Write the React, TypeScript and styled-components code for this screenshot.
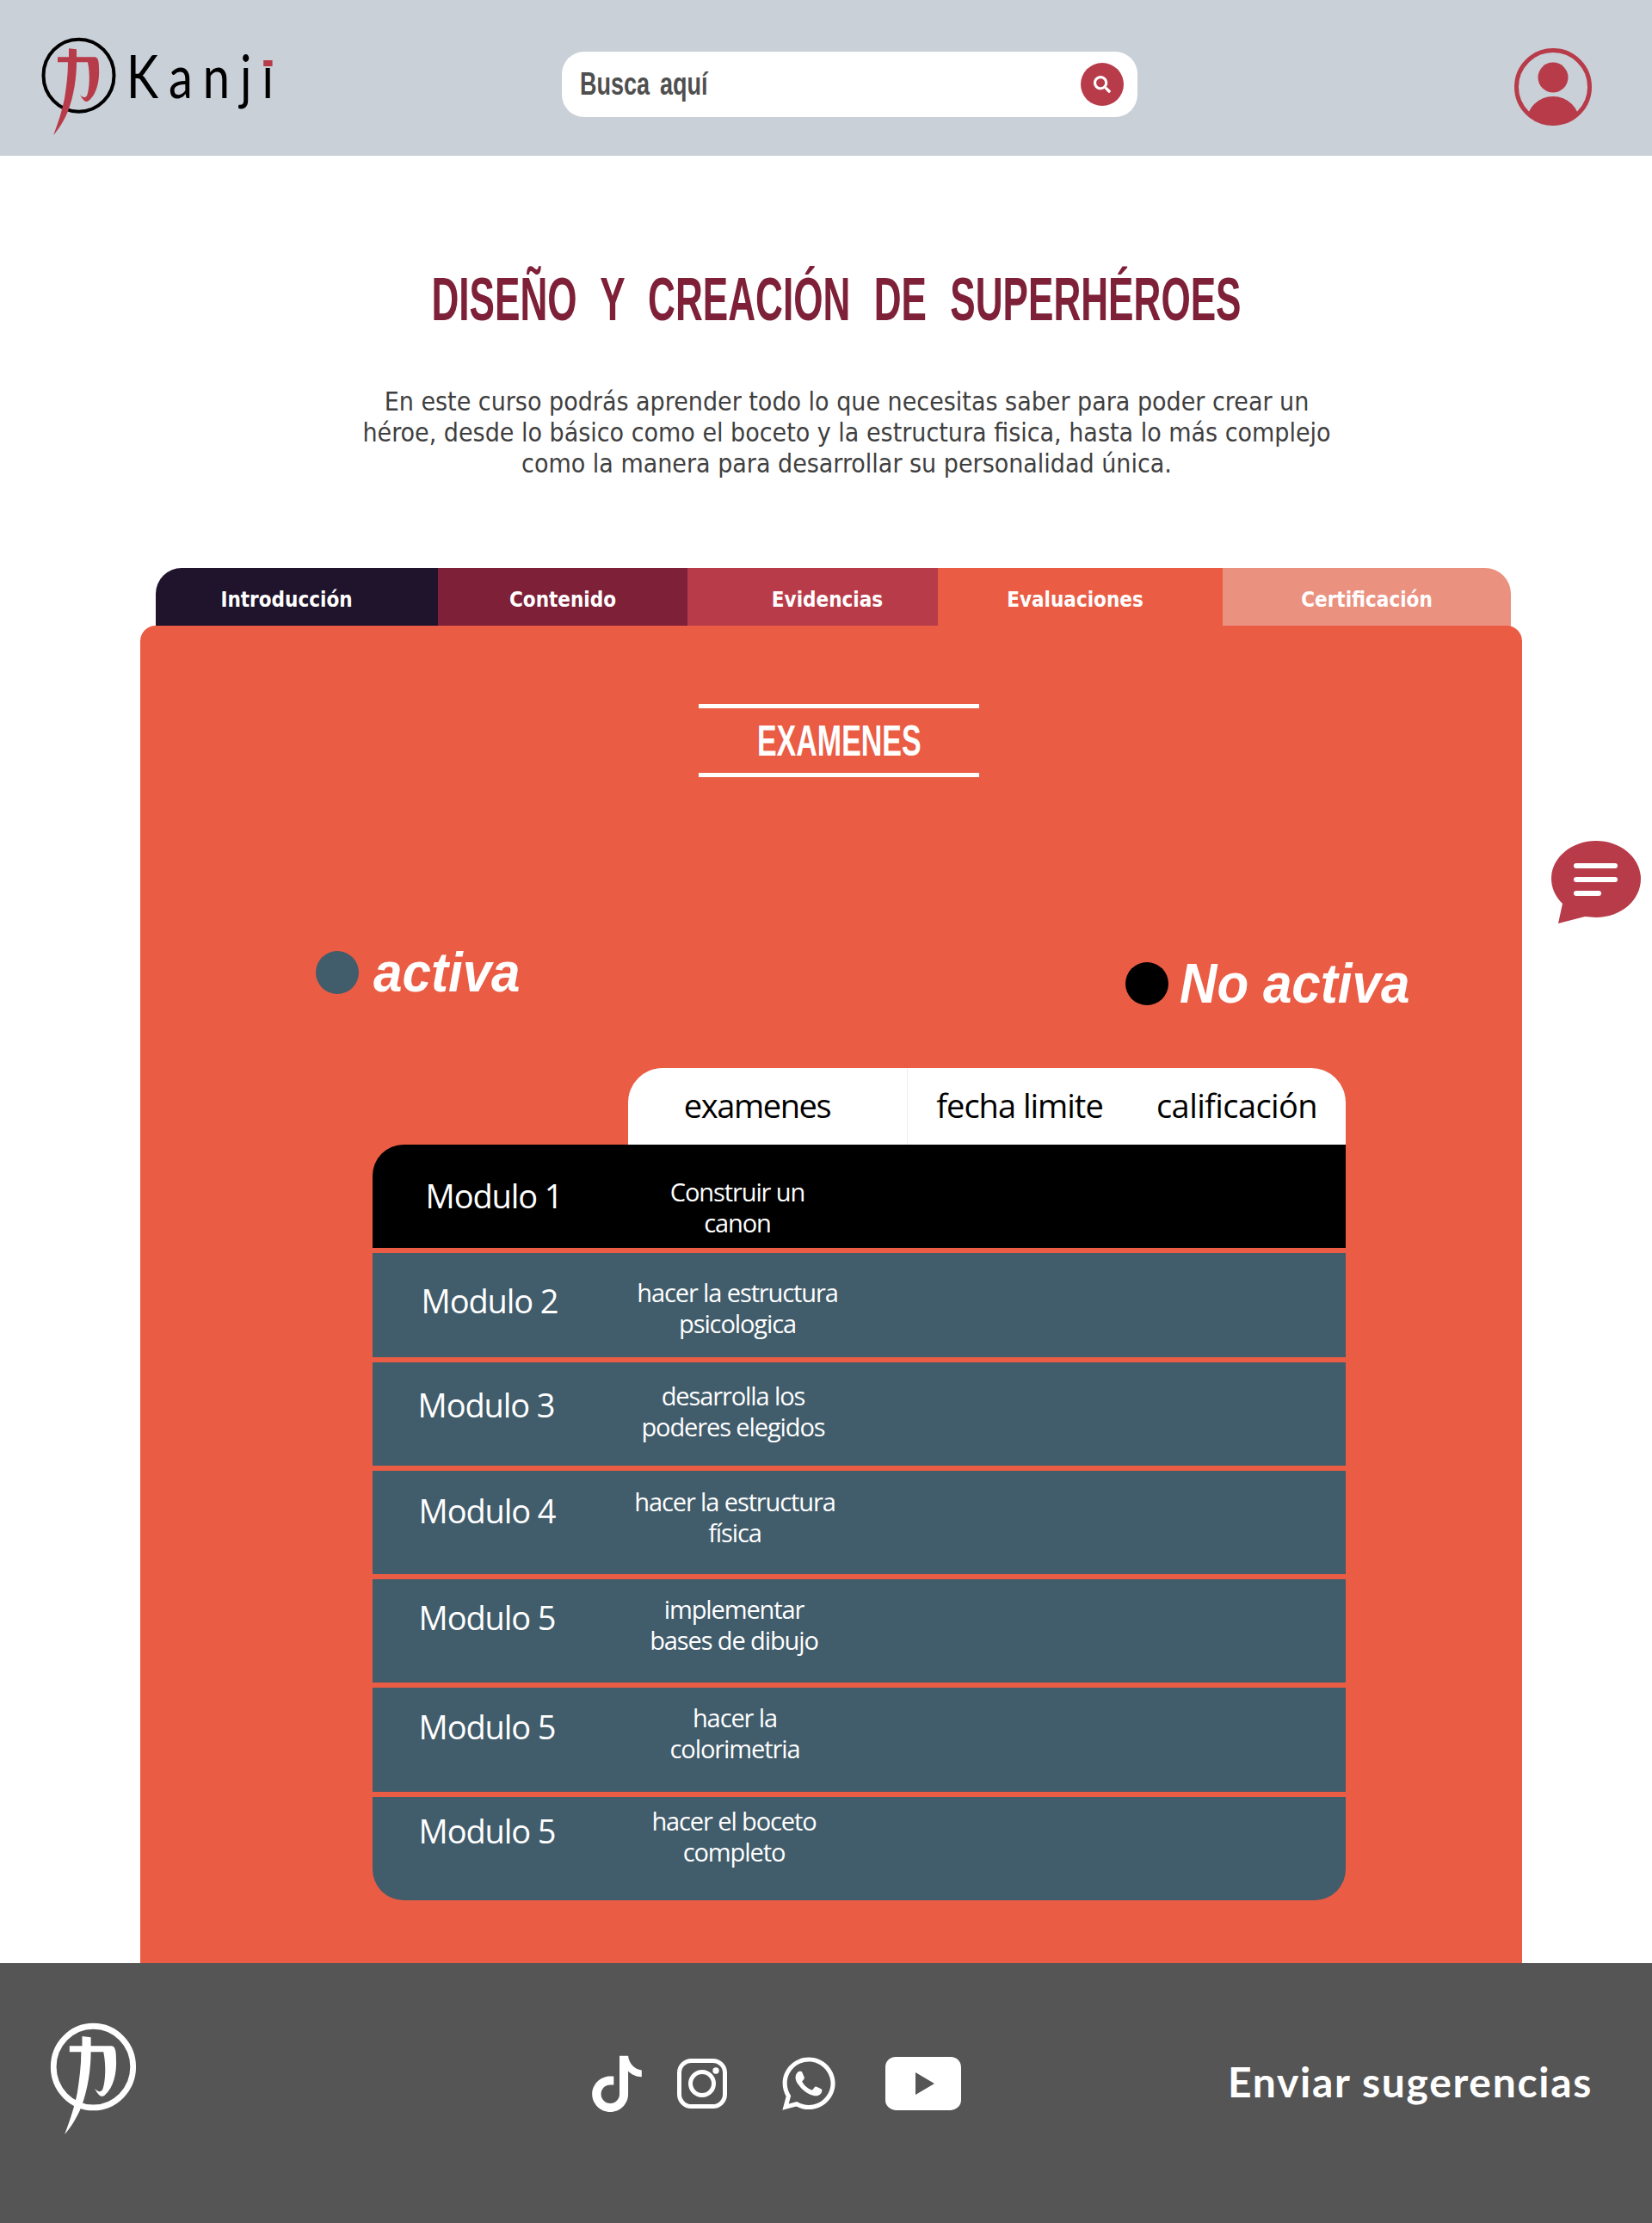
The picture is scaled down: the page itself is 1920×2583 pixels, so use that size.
import React from 'react';
import styled, { createGlobalStyle } from 'styled-components';
import { FaSearch, FaWhatsapp } from 'react-icons/fa';

const GlobalStyle = createGlobalStyle`
  html, body { margin: 0; padding: 0; background: #fff; }
  #root { width: 1920px; height: 2583px; overflow: hidden; position: relative; }
`;

const Header = styled.header`
  height: 181px;
  background: #c9d0d8;
  display: grid;
  grid-template-columns: 653px 669px 1fr;
`;

const Brand = styled.div`
  display: flex;
  align-items: flex-start;
  padding: 41px 0 0 45px;
`;

const Wordmark = styled.div`
  font-family: 'Lato', sans-serif;
  font-weight: 400;
  font-size: 70px;
  line-height: 80px;
  color: #000;
  letter-spacing: 15px;
  margin: 6px 0 0 8px;
  transform: scaleX(0.8);
  transform-origin: left center;
  white-space: nowrap;
`;

/* the logo's i has a small red dot sitting lower than the font's own dot */
const RedDot = styled.span`
  position: relative;
  &::after {
    content: '';
    position: absolute;
    left: 2px;
    top: 17px;
    width: 13px;
    height: 15px;
    background: linear-gradient(#c9d0d8 0 8px, #b83b4a 8px);
  }
`;

const SearchBox = styled.div`
  margin-top: 60px;
  height: 76px;
  background: #fff;
  border-radius: 26px;
  display: flex;
  align-items: center;
  justify-content: space-between;
  padding: 0 16px 0 21px;
  box-sizing: border-box;
`;

const SearchText = styled.span`
  font-family: 'Liberation Sans', sans-serif;
  font-weight: 700;
  font-size: 36px;
  color: #4f4f4f;
  word-spacing: 6px;
  transform: scaleX(0.75);
  transform-origin: left center;
  white-space: nowrap;
`;

const SearchButton = styled.div`
  width: 50px;
  height: 50px;
  border-radius: 50%;
  background: #b83b4a;
  color: #fff;
  display: flex;
  align-items: center;
  justify-content: center;
  font-size: 20px;
`;

const Avatar = styled.svg`
  width: 90px;
  height: 90px;
  justify-self: end;
  margin: 56px 70px 0 0;
`;

const Intro = styled.section`
  padding: 132px 0 103px 24px;
  text-align: center;
`;

const Title = styled.h1`
  margin: 0;
  font-family: 'Liberation Sans', sans-serif;
  font-weight: 700;
  font-size: 70px;
  line-height: 70px;
  color: #7e2038;
  white-space: nowrap;
  word-spacing: 24px;
  transform: scaleX(0.63);
`;

const Lead = styled.p`
  margin: 66px 0 0 24px;
  font-family: 'DejaVu Sans Condensed', 'DejaVu Sans', sans-serif;
  font-size: 30px;
  line-height: 36px;
  color: #3f3f3f;
  white-space: nowrap;
`;

const Tabs = styled.nav`
  display: grid;
  grid-template-columns: 328px 290px 291px 331px 335px;
  width: 1575px;
  height: 68px;
  margin-left: 181px;
  border-radius: 30px 30px 0 0;
  overflow: hidden;
`;

const Tab = styled.div<{ $bg: string; $left?: number; $right?: number }>`
  background: ${p => p.$bg};
  color: #fff;
  display: flex;
  align-items: center;
  justify-content: center;
  padding: 6px ${p => p.$right ?? 0}px 0 ${p => p.$left ?? 0}px;
  box-sizing: border-box;
  font-family: 'DejaVu Sans Condensed', 'DejaVu Sans', sans-serif;
  font-weight: 700;
  font-size: 24px;
`;

const Panel = styled.main`
  width: 1606px;
  height: 1554px;
  margin: -1px 0 0 163px;
  background: #ea5c44;
  border-radius: 18px 18px 0 0;
  position: relative;
  box-sizing: border-box;
  padding-top: 91px;
`;

const SectionTitle = styled.h2`
  width: 326px;
  height: 85px;
  margin: 0 0 0 649px;
  box-sizing: border-box;
  border-top: 5px solid #fff;
  border-bottom: 5px solid #fff;
  display: flex;
  align-items: center;
  justify-content: center;
  font-family: 'Liberation Sans', sans-serif;
  font-weight: 700;
  font-size: 50px;
  color: #fff;
`;

const SectionText = styled.span`
  display: inline-block;
  transform: scaleX(0.68);
`;

const Legend = styled.div`
  display: flex;
  justify-content: space-between;
  align-items: flex-start;
  margin: 202px 113px 0 204px;
`;

const LegendItem = styled.div<{ $top?: number; $gap: number }>`
  display: flex;
  align-items: center;
  gap: ${p => p.$gap}px;
  margin-top: ${p => p.$top ?? 0}px;
`;

const Dot = styled.span<{ $color: string }>`
  width: 50px;
  height: 50px;
  border-radius: 50%;
  background: ${p => p.$color};
`;

const LegendLabel = styled.span`
  font-family: 'Liberation Sans', sans-serif;
  font-weight: 700;
  font-style: italic;
  font-size: 64px;
  line-height: 50px;
  color: #fff;
  white-space: nowrap;
  transform: scaleX(0.94);
  transform-origin: left center;
`;

const TableWrap = styled.div`
  width: 1131px;
  margin: 73px 0 0 270px;
`;

const TableHead = styled.div`
  margin-left: 297px;
  width: 834px;
  height: 89px;
  background: #fff;
  border-radius: 40px 40px 0 0;
  display: grid;
  grid-template-columns: 325px 256px 253px;
`;

const HeadCell = styled.div<{ $line?: boolean; $right?: number; $left?: number; $spacing: number }>`
  display: flex;
  align-items: center;
  justify-content: center;
  box-sizing: border-box;
  padding: 0 ${p => p.$right ?? 0}px 4px ${p => p.$left ?? 0}px;
  border-right: ${p => (p.$line ? '1px solid #eee' : 'none')};
  font-family: 'Open Sans', sans-serif;
  font-size: 38px;
  letter-spacing: ${p => p.$spacing}px;
  color: #000;
`;

const Rows = styled.div`
  display: flex;
  flex-direction: column;
  gap: 6px;
`;

const Row = styled.div<{ $active?: boolean }>`
  height: 120.3px;
  display: grid;
  grid-template-columns: 264px 302px 1fr;
  align-items: start;
  background: ${p => (p.$active ? '#000' : '#415c6b')};
  color: #fff;
  font-family: 'Open Sans', sans-serif;
  &:first-child { border-top-left-radius: 36px; }
  &:last-child { border-radius: 0 0 36px 36px; }
`;

const RowLabel = styled.div<{ $top: number; $nudge: number }>`
  margin-top: ${p => p.$top}px;
  padding-left: ${p => p.$nudge * 2}px;
  text-align: center;
  font-size: 38px;
  line-height: 50px;
  letter-spacing: -1.1px;
`;

const RowText = styled.div<{ $top: number; $nudge: number }>`
  margin-top: ${p => p.$top}px;
  padding-left: ${p => p.$nudge * 2}px;
  text-align: center;
  font-size: 29px;
  line-height: 36px;
  letter-spacing: -1.1px;
`;

const ChatBubble = styled.svg`
  position: absolute;
  left: 1803px;
  top: 977px;
  width: 104px;
  height: 96px;
`;

const Footer = styled.footer`
  height: 302px;
  background: #555;
  display: grid;
  grid-template-columns: 688px 739px 1fr;
  color: #fff;
`;

const FooterBrand = styled.div`
  padding: 68px 0 0 56px;
`;

const Socials = styled.div`
  display: flex;
  align-items: center;
  height: 65px;
  margin-top: 107px;
`;

const SocialSlot = styled.span<{ $gap: number }>`
  display: flex;
  margin-left: ${p => p.$gap}px;
`;

const FooterLink = styled.div`
  margin-top: 106px;
  font-family: 'Lato', sans-serif;
  font-weight: 700;
  font-size: 48px;
  line-height: 64px;
  letter-spacing: 1.7px;
  white-space: nowrap;
`;

function KanjiMark({ width, ring, ink, stroke }: { width: number; ring: string; ink: string; stroke: number }) {
  return (
    <svg width={width} height={width * 1.28} viewBox="45 42 94 120" style={{ flex: 'none' }}>
      <ellipse cx="91.5" cy="88.5" rx="41" ry="42" fill="none" stroke={ring} strokeWidth={stroke} />
      <path
        fill={ink}
        d="M80 57 L89 58 L89 67 L110 67 C114 67 115 72 115 80 C116 95 112 110 104 117 C100 121 97 118 93 111 C96 114 99 115 101 112 C104 104 105 88 102 73 L89 73 C89 90 86 112 79 130 C74 142 68 151 62 158 C68 142 72 130 75 115 C77 102 79 88 79 73 L67 73 L67 67 L80 67 Z"
      />
    </svg>
  );
}

const tabs = [
  { label: 'Introducción', bg: '#20142c', right: 24 },
  { label: 'Contenido', bg: '#7e2038' },
  { label: 'Evidencias', bg: '#b83b4a', left: 34 },
  { label: 'Evaluaciones', bg: '#ea5c44', right: 12 },
  { label: 'Certificación', bg: '#ea9180' },
];

const modules = [
  { name: 'Modulo 1', text: ['Construir un', 'canon'], active: true, nameTop: 34, nameX: 9, textTop: 37, textX: 9 },
  { name: 'Modulo 2', text: ['hacer la estructura', 'psicologica'], nameTop: 30, nameX: 4, textTop: 28, textX: 9 },
  { name: 'Modulo 3', text: ['desarrolla los', 'poderes elegidos'], nameTop: 24, nameX: 0, textTop: 21, textX: 4 },
  { name: 'Modulo 4', text: ['hacer la estructura', 'física'], nameTop: 21, nameX: 1, textTop: 18, textX: 6 },
  { name: 'Modulo 5', text: ['implementar', 'bases de dibujo'], nameTop: 19, nameX: 1, textTop: 17, textX: 5 },
  { name: 'Modulo 5', text: ['hacer la', 'colorimetria'], nameTop: 20, nameX: 1, textTop: 17, textX: 6 },
  { name: 'Modulo 5', text: ['hacer el boceto', 'completo'], nameTop: 14, nameX: 1, textTop: 10, textX: 5 },
];

export default function App() {
  return (
    <>
      <GlobalStyle />
      <Header>
        <Brand>
          <KanjiMark width={94} ring="#000" ink="#b83b4a" stroke={4} />
          <Wordmark>
            Kanj<RedDot>i</RedDot>
          </Wordmark>
        </Brand>
        <SearchBox>
          <SearchText>Busca aquí</SearchText>
          <SearchButton>
            <FaSearch />
          </SearchButton>
        </SearchBox>
        <Avatar viewBox="0 0 90 90">
          <defs>
            <clipPath id="avatar-clip">
              <circle cx="45" cy="45" r="42" />
            </clipPath>
          </defs>
          <circle cx="45" cy="45" r="42.5" fill="none" stroke="#b83b4a" strokeWidth="5" />
          <circle cx="45" cy="34" r="17.5" fill="#b83b4a" />
          <circle cx="45" cy="87" r="31" fill="#b83b4a" clipPath="url(#avatar-clip)" />
        </Avatar>
      </Header>

      <Intro>
        <Title>DISEÑO Y CREACIÓN DE SUPERHÉROES</Title>
        <Lead>
          En este curso podrás aprender todo lo que necesitas saber para poder crear un
          <br />
          héroe, desde lo básico como el boceto y la estructura fisica, hasta lo más complejo
          <br />
          como la manera para desarrollar su personalidad única.
        </Lead>
      </Intro>

      <Tabs>
        {tabs.map(t => (
          <Tab key={t.label} $bg={t.bg} $left={t.left} $right={t.right}>
            {t.label}
          </Tab>
        ))}
      </Tabs>

      <Panel>
        <SectionTitle>
          <SectionText>EXAMENES</SectionText>
        </SectionTitle>

        <Legend>
          <LegendItem $gap={17}>
            <Dot $color="#415c6b" />
            <LegendLabel>activa</LegendLabel>
          </LegendItem>
          <LegendItem $top={13} $gap={13}>
            <Dot $color="#000" />
            <LegendLabel>No activa</LegendLabel>
          </LegendItem>
        </Legend>

        <TableWrap>
          <TableHead>
            <HeadCell $line $right={24} $spacing={-1.4}>examenes</HeadCell>
            <HeadCell $left={4} $spacing={-1}>fecha limite</HeadCell>
            <HeadCell $spacing={-0.6}>calificación</HeadCell>
          </TableHead>
          <Rows>
            {modules.map((m, i) => (
              <Row key={i} $active={m.active}>
                <RowLabel $top={m.nameTop} $nudge={m.nameX}>{m.name}</RowLabel>
                <RowText $top={m.textTop} $nudge={m.textX}>
                  {m.text[0]}
                  <br />
                  {m.text[1]}
                </RowText>
              </Row>
            ))}
          </Rows>
        </TableWrap>
      </Panel>

      <ChatBubble viewBox="0 0 104 96">
        <path
          fill="#b83b4a"
          d="M52 0 C81 0 104 20 104 44 C104 69 81 89 52 89 C47 89 43 88 39 88 L8 96 L13 73 C5 65 0 55 0 44 C0 20 23 0 52 0 Z"
        />
        <rect x="26" y="26" width="51" height="6" rx="3" fill="#fff" />
        <rect x="26" y="42" width="51" height="6" rx="3" fill="#fff" />
        <rect x="26" y="58" width="32" height="6" rx="3" fill="#fff" />
      </ChatBubble>

      <Footer>
        <FooterBrand>
          <KanjiMark width={106} ring="#fff" ink="#fff" stroke={6} />
        </FooterBrand>
        <Socials>
          <SocialSlot $gap={0}>
            <svg width="58" height="66" viewBox="85 113 172 197">
              <path
                fill="#fff"
                d="M180 115 L210 115 C212 140 232 162 257 165 L257 188 C238 188 222 180 210 168 L210 248 C210 282 182 310 148 310 C114 310 85 282 85 248 C85 214 114 186 147 186 L160 186 L160 216 L148 216 C130 216 116 230 116 248 C116 266 130 280 148 280 C166 280 180 266 180 248 Z"
              />
            </svg>
          </SocialSlot>
          <SocialSlot $gap={41}>
            <svg width="58" height="58" viewBox="0 0 58 58" fill="none" stroke="#fff" strokeWidth="5">
              <rect x="2.5" y="2.5" width="53" height="53" rx="14" />
              <circle cx="29" cy="29" r="13.5" />
              <circle cx="45" cy="14" r="3.7" fill="#fff" stroke="none" />
            </svg>
          </SocialSlot>
          <SocialSlot $gap={60}><FaWhatsapp size={70} /></SocialSlot>
          <SocialSlot $gap={54}>
            <svg width="88" height="62" viewBox="0 0 88 62">
              <path
                fillRule="evenodd"
                fill="#fff"
                d="M12 0 C30 -1 58 -1 76 0 C83 0 88 5 88 12 C89 24 89 38 88 50 C88 57 83 61 76 62 C58 63 30 63 12 62 C5 61 0 57 0 50 C-1 38 -1 24 0 12 C0 5 5 0 12 0 Z M35 18 L35 44 L57 31 Z"
              />
            </svg>
          </SocialSlot>
        </Socials>
        <FooterLink>Enviar sugerencias</FooterLink>
      </Footer>
    </>
  );
}
